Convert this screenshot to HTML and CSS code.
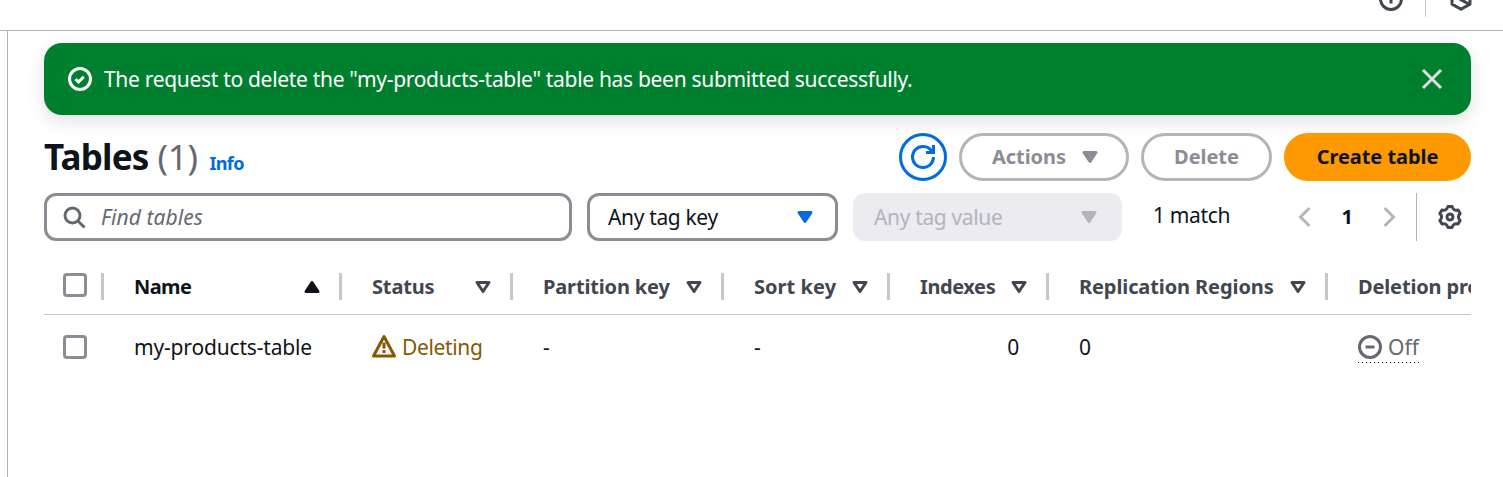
FILE: index.html
```
<!DOCTYPE html>
<html lang="en">
<head>
<meta charset="utf-8">
<title>Tables</title>
<link rel="stylesheet" href="styles.css">
</head>
<body>
<header class="topbar">
  <svg class="icon first" viewBox="0 0 16 16"><circle cx="8" cy="8" r="7"/><path d="M8 11V7M8 6V4"/></svg>
  <span class="topbar-divider"></span>
  <svg class="icon" viewBox="0 0 16 16"><path stroke-linejoin="round" d="M8 1.2 14 4.6v6.8L8 14.8l-6-3.4V4.6z"/><path d="M8 4v4.500l5.600 3M7 8.500h3"/></svg>
</header>
<div class="shell">
  <main class="content">
    <div class="flash">
      <svg class="icon" viewBox="0 0 16 16"><circle cx="8" cy="8" r="7"/><path d="m5 8 2 2 3.521-3.521"/></svg>
      <span class="flash-text">The request to delete the "my-products-table" table has been submitted successfully.</span>
      <svg class="icon close" viewBox="0 0 16 16"><path d="m2 2 12 12M14 2 2 14"/></svg>
    </div>
    <div class="heading">
      <h1 class="title">Tables</h1>
      <span class="count">(1)</span>
      <a class="info">Info</a>
      <div class="actions">
        <button class="btn btn-icon"><svg class="icon" viewBox="0 0 16 16"><path d="M10 5h5V0"/><path d="M15 8a6.957 6.957 0 0 1-7 7 6.957 6.957 0 0 1-7-7 6.957 6.957 0 0 1 7-7 6.87 6.87 0 0 1 6.3 4"/></svg></button>
        <button class="btn btn-actions">Actions<svg class="icon filled" viewBox="0 0 16 16"><path d="m4 5 4 6 4-6z"/></svg></button>
        <button class="btn btn-delete">Delete</button>
        <button class="btn btn-primary">Create table</button>
      </div>
    </div>
    <div class="filters">
      <div class="field search"><svg class="icon" viewBox="0 0 16 16"><circle cx="7" cy="7" r="5"/><path d="m15 15-4.5-4.5"/></svg><span>Find tables</span></div>
      <div class="field tag-key"><span>Any tag key</span><svg class="icon filled" viewBox="0 0 16 16"><path d="m4 5 4 6 4-6z"/></svg></div>
      <div class="field tag-value"><span>Any tag value</span><svg class="icon filled" viewBox="0 0 16 16"><path d="m4 5 4 6 4-6z"/></svg></div>
      <span class="matches">1 match</span>
      <div class="pager">
        <svg class="icon" viewBox="0 0 16 16"><path d="m11 2-6 6 6 6"/></svg>
        <span class="page">1</span>
        <svg class="icon" viewBox="0 0 16 16"><path d="m5 2 6 6-6 6"/></svg>
      </div>
      <div class="prefs"><svg class="icon" viewBox="0 0 16 16"><path stroke-linejoin="round" d="M6.6 1h2.800Q10.200 4.200 13.360 3.290L14.760 5.710Q12.400 8 14.760 10.290L13.360 12.710Q10.200 11.800 9.400 15H6.600Q5.800 11.800 2.640 12.710L1.240 10.290Q3.600 8 1.240 5.710L2.640 3.290Q5.800 4.200 6.600 1z"/><circle cx="8" cy="8" r="2"/></svg></div>
    </div>
    <div class="table">
      <div class="row head">
        <div class="cell select"><span class="checkbox"></span></div>
        <div class="cell sorted"><span>Name</span><svg class="icon filled" viewBox="0 0 16 16"><path d="M12 11 8 5l-4 6z"/></svg></div>
        <div class="cell"><span>Status</span><svg class="icon" viewBox="0 0 16 16"><path d="m4 5 4 6 4-6z"/></svg></div>
        <div class="cell"><span>Partition key</span><svg class="icon" viewBox="0 0 16 16"><path d="m4 5 4 6 4-6z"/></svg></div>
        <div class="cell sort-key"><span>Sort key</span><svg class="icon" viewBox="0 0 16 16"><path d="m4 5 4 6 4-6z"/></svg></div>
        <div class="cell indexes"><span>Indexes</span><svg class="icon" viewBox="0 0 16 16"><path d="m4 5 4 6 4-6z"/></svg></div>
        <div class="cell regions"><span>Replication Regions</span><svg class="icon" viewBox="0 0 16 16"><path d="m4 5 4 6 4-6z"/></svg></div>
        <div class="cell last"><span>Deletion protection</span></div>
      </div>
      <div class="row body">
        <div class="cell select"><span class="checkbox"></span></div>
        <div class="cell name">my-products-table</div>
        <div class="cell warning"><svg class="icon" viewBox="0 0 16 16"><path stroke-linejoin="round" d="m8 1 7 13H1z"/><path d="M8 5v4M8 10v2"/></svg><span>Deleting</span></div>
        <div class="cell">-</div>
        <div class="cell">-</div>
        <div class="cell number">0</div>
        <div class="cell">0</div>
        <div class="cell last"><span class="off"><svg class="icon" viewBox="0 0 16 16"><circle cx="8" cy="8" r="7"/><path d="M11 8H5"/></svg><span>Off</span></span></div>
      </div>
    </div>
  </main>
</div>
</body>
</html>
```
FILE: styles.css
```
* { box-sizing: border-box; }
body { margin: 0; height: 477px; overflow: hidden; background: #fff; color: #0f141a; font: 21px/30px "Noto Sans", "Open Sans", sans-serif; letter-spacing: -0.35px; display: flex; flex-direction: column; white-space: nowrap; }
.icon { width: 24px; height: 24px; flex: none; display: block; fill: none; stroke: currentColor; stroke-width: 2; overflow: visible; }
.filled { fill: currentColor; }
.icon path[d^="m4 5"], .icon path[d^="M12 11"] { stroke-linejoin: round; }

.topbar { width: 100%; height: 31px; flex: none; border-bottom: 1px solid #b4b4bb; display: flex; padding-right: 30px; overflow: hidden; color: #424650; }
.topbar .icon { margin-top: -13px; }
.topbar .first { margin-left: auto; }
.topbar-divider { width: 1px; height: 17px; background: #c6c6cd; margin: 0 23px 0 22px; }
.shell { flex: 1; margin-left: 7px; border-left: 1px solid #b4b4bb; }
.content { padding: 12px 32px 0 36px; }

.flash { height: 72px; border-radius: 18px; background: #00802f; color: #fff; display: flex; align-items: center; padding: 0 27px 0 24px; box-shadow: 0 6px 18px rgba(15, 20, 26, 0.12); }
.flash-text { margin: -1px 0 0 12px; letter-spacing: -0.31px; }
.close { margin-left: auto; color: #dedee3; }

.heading { display: flex; height: 48px; margin-top: 18px; align-items: baseline; line-height: 47px; }
.title { margin: 0; font-size: 35px; font-weight: 700; letter-spacing: -0.8px; }
.count { font-size: 35px; color: #656871; margin-left: 9px; }
.info { font-size: 18px; font-weight: 700; color: #006ce0; margin-left: 12px; letter-spacing: -0.7px; }
.actions { display: flex; gap: 12px; margin-left: auto; align-self: flex-start; }
.btn { height: 48px; border: 3px solid #b4b4bb; border-radius: 24px; background: #fff; color: #8c8c94; font: 700 20px/30px "Noto Sans", sans-serif; letter-spacing: -0.05px; padding: 0; display: flex; align-items: center; justify-content: center; }
.btn-icon { width: 48px; color: #006ce0; border-color: #006ce0; }
.btn-actions { width: 170px; gap: 12px; padding-left: 6px; }
.btn-delete { width: 131px; }
.btn-primary { width: 187px; color: #0f141a; background: #ff9900; border-color: #ff9900; }

.filters { display: flex; margin-top: 12px; height: 48px; align-items: center; }
.field { height: 48px; border: 3px solid #8c8c94; border-radius: 12px; display: flex; align-items: center; justify-content: space-between; padding: 0 18px; }
.field span { margin-top: -1px; }
.search { width: 528px; justify-content: flex-start; padding-left: 15px; gap: 15px; color: #656871; font-style: italic; letter-spacing: 0.05px; }
.tag-key { width: 251px; margin-left: 15px; }
.tag-key .icon { color: #006ce0; }
.tag-value { width: 269px; margin-left: 15px; background: #ebebf0; border-color: #ebebf0; color: #b4b4bb; }
.matches { margin: -5px 0 0 31px; letter-spacing: -0.35px; width: 78px; }
.pager { display: flex; align-items: center; margin-left: 62px; color: #b4b4bb; }
.page { width: 60px; text-align: center; color: #0f141a; font-weight: 700; font-size: 20px; }
.prefs { height: 48px; margin-left: 15px; border-left: 1px solid #b4b4bb; display: flex; align-items: center; padding-left: 21px; color: #424650; }

.table { margin-top: 18px; overflow: hidden; }
.row { display: grid; grid-template-columns: 60px 238px 171px 211px 166px 159px 279px 143px; }
.cell { display: flex; align-items: center; padding-left: 30px; min-width: 0; }
.head { height: 56px; border-bottom: 1px solid #c6c6cd; color: #424650; font-weight: 700; font-size: 20px; letter-spacing: -0.15px; }
.head .cell { height: 27px; margin-top: 14px; border-right: 3px solid #c6c6cd; justify-content: space-between; padding-right: 15px; }
.head .cell.select { padding: 0 0 3px 19px; }
.head .cell.last { border: 0; overflow: hidden; padding-right: 0; }
.head .sorted { color: #0f141a; letter-spacing: -0.6px; }
.head .sort-key { letter-spacing: 0.05px; }
.head .indexes { letter-spacing: -0.4px; }
.head .regions { letter-spacing: -0.1px; }
.body { height: 64px; }
.cell.select { padding-left: 19px; }
.checkbox { width: 24px; height: 24px; border: 3px solid #8c8c94; border-radius: 4px; }
.name { letter-spacing: -0.17px; }
.warning { gap: 6px; color: #855900; }
.number { justify-content: flex-end; padding-right: 30px; }
.off { display: flex; align-items: center; gap: 6px; height: 31px; padding-bottom: 1px; background: repeating-linear-gradient(90deg, #0f141a 0 1px, transparent 1px 4px) left bottom / 100% 1px no-repeat; color: #656871; letter-spacing: 0; }
```
